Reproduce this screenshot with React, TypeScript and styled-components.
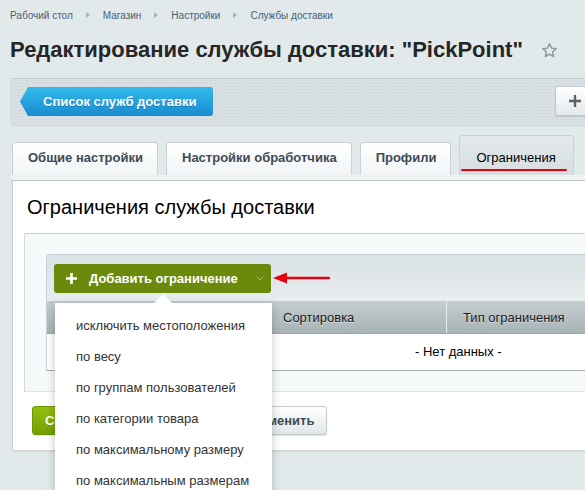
import React from 'react';
import styled, { createGlobalStyle } from 'styled-components';

const GlobalStyle = createGlobalStyle`
  html {
    overflow: hidden;
  }
  body {
    margin: 0;
    padding: 0;
    min-height: 100vh;
    background: #e2e9eb;
    font-family: "Liberation Sans", Arial, sans-serif;
    font-size: 13px;
    color: #333;
  }
`;

const Page = styled.div`
  width: 620px;
  min-height: 100vh;
  padding-left: 10px;
`;

const Breadcrumbs = styled.div`
  display: flex;
  align-items: center;
  height: 30px;
  font-size: 10px;
  color: #46607a;
`;

const Crumb = styled.span`
  white-space: nowrap;
`;

const CrumbSep = styled.span`
  display: block;
  flex: none;
  width: 0;
  height: 0;
  margin: 0 13px;
  border-top: 3px solid transparent;
  border-bottom: 3px solid transparent;
  border-left: 4px solid #aab4ba;
`;

const TitleRow = styled.div`
  display: flex;
  align-items: center;
  height: 40px;
  margin-bottom: 8px;
`;

const Title = styled.h1`
  margin: 0;
  font-size: 22px;
  line-height: 26px;
  font-weight: bold;
  color: #262626;
  white-space: nowrap;
`;

const StarIcon = styled.svg`
  margin-left: 18px;
  flex: none;
`;

const Toolbar = styled.div`
  display: flex;
  align-items: flex-start;
  box-sizing: border-box;
  height: 48px;
  padding-top: 8px;
  border-top: 1px dotted #b3bcc0;
  border-radius: 3px 0 0 3px;
  background-color: #d9e0e3;
  background-image: radial-gradient(circle, #c9d1d5 0.7px, transparent 1px);
  background-size: 3px 3px;
  box-shadow: inset 0 -1px 0 #cdd5d8;
`;

const BackButton = styled.button`
  height: 29px;
  margin-left: 10px;
  padding: 0 17px 0 23px;
  border: none;
  border-radius: 0 3px 3px 0;
  background: linear-gradient(#31baeb, #1a8ccf);
  clip-path: polygon(8px 0, 100% 0, 100% 100%, 8px 100%, 0 50%);
  color: #fff;
  font-family: inherit;
  font-size: 13px;
  font-weight: bold;
  text-shadow: 0 1px 0 rgba(0, 60, 110, 0.35);
  white-space: nowrap;
`;

const PlusButton = styled.button`
  width: 40px;
  height: 30px;
  margin: -1px 35px 0 auto;
  padding: 0;
  border: 1px solid #c3cacd;
  border-radius: 3px;
  background: linear-gradient(#ffffff, #e4e9eb);
  box-shadow: 0 1px 1px rgba(0, 0, 0, 0.12);
  display: flex;
  align-items: center;
  justify-content: center;
`;

const Tabs = styled.div`
  display: flex;
  align-items: flex-end;
  gap: 8px;
  margin: 9px 0 0 2px;
`;

const Tab = styled.div<{ $active?: boolean }>`
  position: relative;
  box-sizing: border-box;
  height: ${p => (p.$active ? '40px' : '33px')};
  padding: ${p => (p.$active ? '14px 17px 0 16px' : '7px 14px 0 15px')};
  border: 1px solid #c9d1d4;
  border-bottom: none;
  border-radius: 3px 3px 0 0;
  background: ${p =>
    p.$active
      ? 'linear-gradient(#e3e9eb, #d6dee1)'
      : 'linear-gradient(#ffffff, #f1f4f5)'};
  color: ${p => (p.$active ? '#000' : '#3f4b54')};
  font-weight: ${p => (p.$active ? 'normal' : 'bold')};
  font-size: 13px;
  line-height: 16px;
  white-space: nowrap;
`;

const TabMark = styled.span`
  position: absolute;
  left: 1px;
  right: 6px;
  bottom: 4px;
  height: 2px;
  border-radius: 1px;
  background: #e8000b;
`;

const TabsBase = styled.div`
  height: 5px;
  margin-left: 1px;
  background: #eff3f4;
  border-bottom: 1px solid #bcc5c8;
`;

const Panel = styled.div`
  margin-left: 2px;
  background: #fff;
  border-left: 1px solid #cdd4d6;
  border-bottom: 1px solid #cdd4d6;
  box-shadow: 0 1px 2px rgba(0, 0, 0, 0.06);
`;

const PanelHeading = styled.div`
  height: 52px;
  padding-left: 14px;
  line-height: 52px;
  font-size: 20px;
  color: #000;
`;

const InnerArea = styled.div`
  margin-left: 11px;
  padding: 20px 0 20px 21px;
  background: #f5f9f9;
  border-top: 1px solid #c9d1d3;
  border-left: 1px solid #d3dadc;
  border-bottom: 1px solid #dce4e6;
`;

const Grid = styled.div`
  background: #fff;
  border: 1px solid #c9d1d4;
  border-right: none;
  border-bottom: none;
  border-radius: 4px 0 0 0;
`;

const GridToolbar = styled.div`
  display: flex;
  align-items: center;
  height: 46px;
  padding-left: 7px;
  border-radius: 4px 0 0 0;
  background: linear-gradient(#d9e1e4, #e8edef);
`;

const AddWrap = styled.div`
  position: relative;
`;

const AddButton = styled.button`
  display: flex;
  align-items: center;
  width: 217px;
  height: 29px;
  padding: 0 0 0 12px;
  border: none;
  border-radius: 3px;
  background: #6b8a0b;
  color: #fff;
  font-family: inherit;
  font-size: 13px;
  font-weight: bold;
  white-space: nowrap;
`;

const AddLabel = styled.span`
  margin-left: 12px;
`;

const Chevron = styled.svg`
  margin-left: 18px;
`;

const Menu = styled.div`
  position: absolute;
  top: calc(100% + 10px);
  left: 1px;
  width: 217px;
  padding-top: 7px;
  background: #fff;
  box-shadow: 0 2px 9px rgba(0, 0, 0, 0.22);
  z-index: 5;

  &::before {
    content: '';
    position: absolute;
    top: -9px;
    left: 99px;
    border-left: 9px solid transparent;
    border-right: 9px solid transparent;
    border-bottom: 9px solid #fff;
  }
`;

const MenuItem = styled.div`
  height: 31px;
  padding-left: 21px;
  line-height: 31px;
  font-size: 13px;
  color: #333;
  white-space: nowrap;
`;

const Pointer = styled.svg`
  margin-left: 2px;
`;

const HeaderRow = styled.div`
  display: flex;
  align-items: stretch;
  box-sizing: border-box;
  height: 33px;
  border-bottom: 1px solid #9ea9ac;
  background: linear-gradient(#c4cdd0, #a9b4b7);
`;

const HeaderCell = styled.div<{ $width?: number; $pad: number; $divider?: boolean }>`
  display: flex;
  align-items: center;
  box-sizing: border-box;
  ${p => (p.$width ? `width: ${p.$width}px; flex: none;` : 'flex: 1;')}
  padding-left: ${p => p.$pad}px;
  border-left: ${p => (p.$divider ? '1px solid #e6ebed' : 'none')};
  color: #1b1b1b;
  font-size: 13px;
  text-shadow: 0 1px 0 rgba(255, 255, 255, 0.5);
  white-space: nowrap;
`;

const EmptyRow = styled.div`
  height: 36px;
  padding-left: 368px;
  line-height: 36px;
  border-bottom: 1px solid #a2abae;
  color: #000;
  font-size: 13px;
  white-space: nowrap;
`;

const Buttons = styled.div`
  display: flex;
  gap: 6px;
  padding: 14px 0 15px 19px;
`;

const FormButton = styled.button<{ $primary?: boolean }>`
  height: 29px;
  padding: 0 12px;
  border: 1px solid ${p => (p.$primary ? '#6b9600' : '#c3cacd')};
  border-radius: 3px;
  background: ${p =>
    p.$primary ? 'linear-gradient(#96be10, #72a000)' : 'linear-gradient(#ffffff, #e1e7e9)'};
  color: ${p => (p.$primary ? '#fff' : '#3f4b54')};
  font-family: inherit;
  font-size: 13px;
  font-weight: bold;
  box-shadow: 0 1px 1px rgba(0, 0, 0, 0.12);
  white-space: nowrap;
`;

const restrictions = [
  'исключить местоположения',
  'по весу',
  'по группам пользователей',
  'по категории товара',
  'по максимальному размеру',
  'по максимальным размерам',
];

const crumbs = ['Рабочий стол', 'Магазин', 'Настройки', 'Службы доставки'];

const tabs = ['Общие настройки', 'Настройки обработчика', 'Профили', 'Ограничения'];

export default function App() {
  return (
    <>
      <GlobalStyle />
      <Page>
        <Breadcrumbs>
          {crumbs.map((c, i) => (
            <React.Fragment key={c}>
              {i > 0 && <CrumbSep />}
              <Crumb>{c}</Crumb>
            </React.Fragment>
          ))}
        </Breadcrumbs>

        <TitleRow>
          <Title>Редактирование службы доставки: "PickPoint"</Title>
          <StarIcon width="17" height="17" viewBox="0 0 24 24">
            <path
              d="M12 2.5l2.9 6.2 6.6.7-5 4.5 1.4 6.6L12 17.2l-5.9 3.3 1.4-6.6-5-4.5 6.6-.7z"
              fill="none"
              stroke="#8c969c"
              strokeWidth="2"
              strokeLinejoin="round"
            />
          </StarIcon>
        </TitleRow>

        <Toolbar>
          <BackButton>Список служб доставки</BackButton>
          <PlusButton>
            <svg width="12" height="12" viewBox="0 0 12 12">
              <path d="M6 0v12M0 6h12" stroke="#5b646a" strokeWidth="2.4" />
            </svg>
          </PlusButton>
        </Toolbar>

        <Tabs>
          {tabs.map((t, i) => {
            const active = i === tabs.length - 1;
            return (
              <Tab key={t} $active={active}>
                {t}
                {active && <TabMark />}
              </Tab>
            );
          })}
        </Tabs>
        <TabsBase />

        <Panel>
          <PanelHeading>Ограничения службы доставки</PanelHeading>
          <InnerArea>
            <Grid>
              <GridToolbar>
                <AddWrap>
                  <AddButton>
                    <svg width="11" height="11" viewBox="0 0 11 11">
                      <path d="M5.5 0v11M0 5.5h11" stroke="#fff" strokeWidth="2.6" />
                    </svg>
                    <AddLabel>Добавить ограничение</AddLabel>
                    <Chevron width="8" height="5" viewBox="0 0 8 5">
                      <path d="M0.5 0.5L4 4l3.5-3.5" fill="none" stroke="#a9bd6a" strokeWidth="1" />
                    </Chevron>
                  </AddButton>
                  <Menu>
                    {restrictions.map(r => (
                      <MenuItem key={r}>{r}</MenuItem>
                    ))}
                  </Menu>
                </AddWrap>
                <Pointer width="57" height="12" viewBox="0 0 57 12">
                  <path d="M14 6h42" stroke="#e8000b" strokeWidth="2.5" strokeLinecap="round" />
                  <path d="M0 6l14-5.5v11z" fill="#e8000b" />
                </Pointer>
              </GridToolbar>
              <HeaderRow>
                <HeaderCell $width={226} $pad={10} />
                <HeaderCell $width={173} $pad={10}>Сортировка</HeaderCell>
                <HeaderCell $pad={16} $divider>Тип ограничения</HeaderCell>
              </HeaderRow>
              <EmptyRow>- Нет данных -</EmptyRow>
            </Grid>
          </InnerArea>
          <Buttons>
            <FormButton $primary>Сохранить</FormButton>
            <FormButton>Применить</FormButton>
            <FormButton>Отменить</FormButton>
          </Buttons>
        </Panel>
      </Page>
    </>
  );
}
